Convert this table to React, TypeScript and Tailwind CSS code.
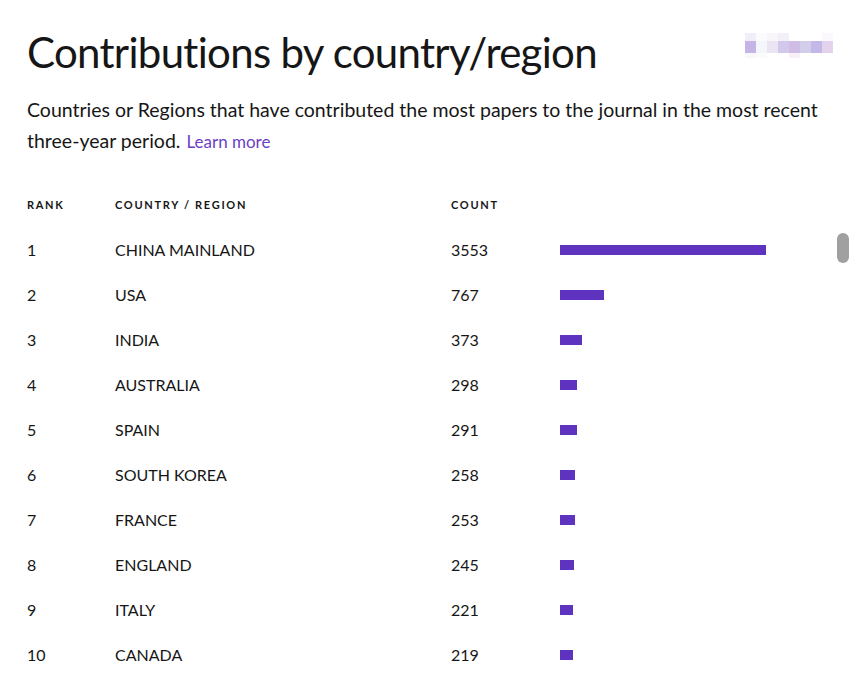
const rows = [
  { rank: 1, name: "CHINA MAINLAND", count: 3553 },
  { rank: 2, name: "USA", count: 767 },
  { rank: 3, name: "INDIA", count: 373 },
  { rank: 4, name: "AUSTRALIA", count: 298 },
  { rank: 5, name: "SPAIN", count: 291 },
  { rank: 6, name: "SOUTH KOREA", count: 258 },
  { rank: 7, name: "FRANCE", count: 253 },
  { rank: 8, name: "ENGLAND", count: 245 },
  { rank: 9, name: "ITALY", count: 221 },
  { rank: 10, name: "CANADA", count: 219 },
];

const MAX = 3553;
const BAR_MAX = 206;

function Pixels() {
  // blurred logo in the corner
  return (
    <div className="mt-[5px] grid grid-cols-[repeat(8,11px)] grid-rows-[8px_12px_5px]">
      <div className="bg-[#f0eef6]" />
      <div className="bg-[#fbfbfd]" />
      <div className="bg-[#f8f6fa]" />
      <div className="bg-[#f2f0f8]" />
      <div className="bg-white" />
      <div className="bg-white" />
      <div className="bg-white" />
      <div className="bg-[#faf8fc]" />
      <div className="bg-[#c4b5e6]" />
      <div className="bg-[#f5f5fc]" />
      <div className="bg-[#ebe5f3]" />
      <div className="bg-[#d2c8ec]" />
      <div className="bg-[#d0bde6]" />
      <div className="bg-[#d3cdec]" />
      <div className="bg-[#c3b8e8]" />
      <div className="bg-[#e3d3ee]" />
      <div className="bg-[#f8f8fb]" />
      <div className="bg-[#fbfbfd]" />
      <div className="bg-white" />
      <div className="bg-white" />
      <div className="bg-[#f7f0fa]" />
      <div className="bg-white" />
      <div className="bg-white" />
      <div className="bg-white" />
    </div>
  );
}

export default function App() {
  return (
    <div className="relative min-h-[700px] w-[856px] bg-white pl-[27px] pr-[23px] pt-[28px] font-['Lato',sans-serif] text-[#161616]">
      <div className="flex items-start justify-between">
        <h1 className="text-[42px] leading-[48px] font-normal tracking-[-0.7px]">
          Contributions by country/region
        </h1>
        <Pixels />
      </div>
      <div className="mt-[18px] text-[19.5px] leading-[31px]">
        <p>
          Countries or Regions that have contributed the most papers to the
          journal in the most recent
        </p>
        <p className="flex items-baseline gap-[6px]">
          <span>three-year period.</span>
          <a className="text-[17px] text-[#6b3fc4]">Learn more</a>
        </p>
      </div>

      <div className="mt-[26px]">
        <div className="grid h-[44px] grid-cols-[88px_336px_109px_1fr] items-center text-[11px] font-bold tracking-[1.7px]">
          <span>RANK</span>
          <span>COUNTRY / REGION</span>
          <span>COUNT</span>
          <span />
        </div>
        {rows.map((r) => (
          <div
            key={r.rank}
            className="grid h-[45px] grid-cols-[88px_336px_109px_1fr] items-center text-[16px]"
          >
            <span>{r.rank}</span>
            <span>{r.name}</span>
            <span>{r.count}</span>
            <div
              className="h-[10px] bg-[#5e33bf]"
              style={{ width: (r.count / MAX) * BAR_MAX }}
            />
          </div>
        ))}
      </div>

      <div className="absolute right-[7px] top-[233px] h-[30px] w-[12px] rounded-full bg-[#a0a0a0]" />
    </div>
  );
}
